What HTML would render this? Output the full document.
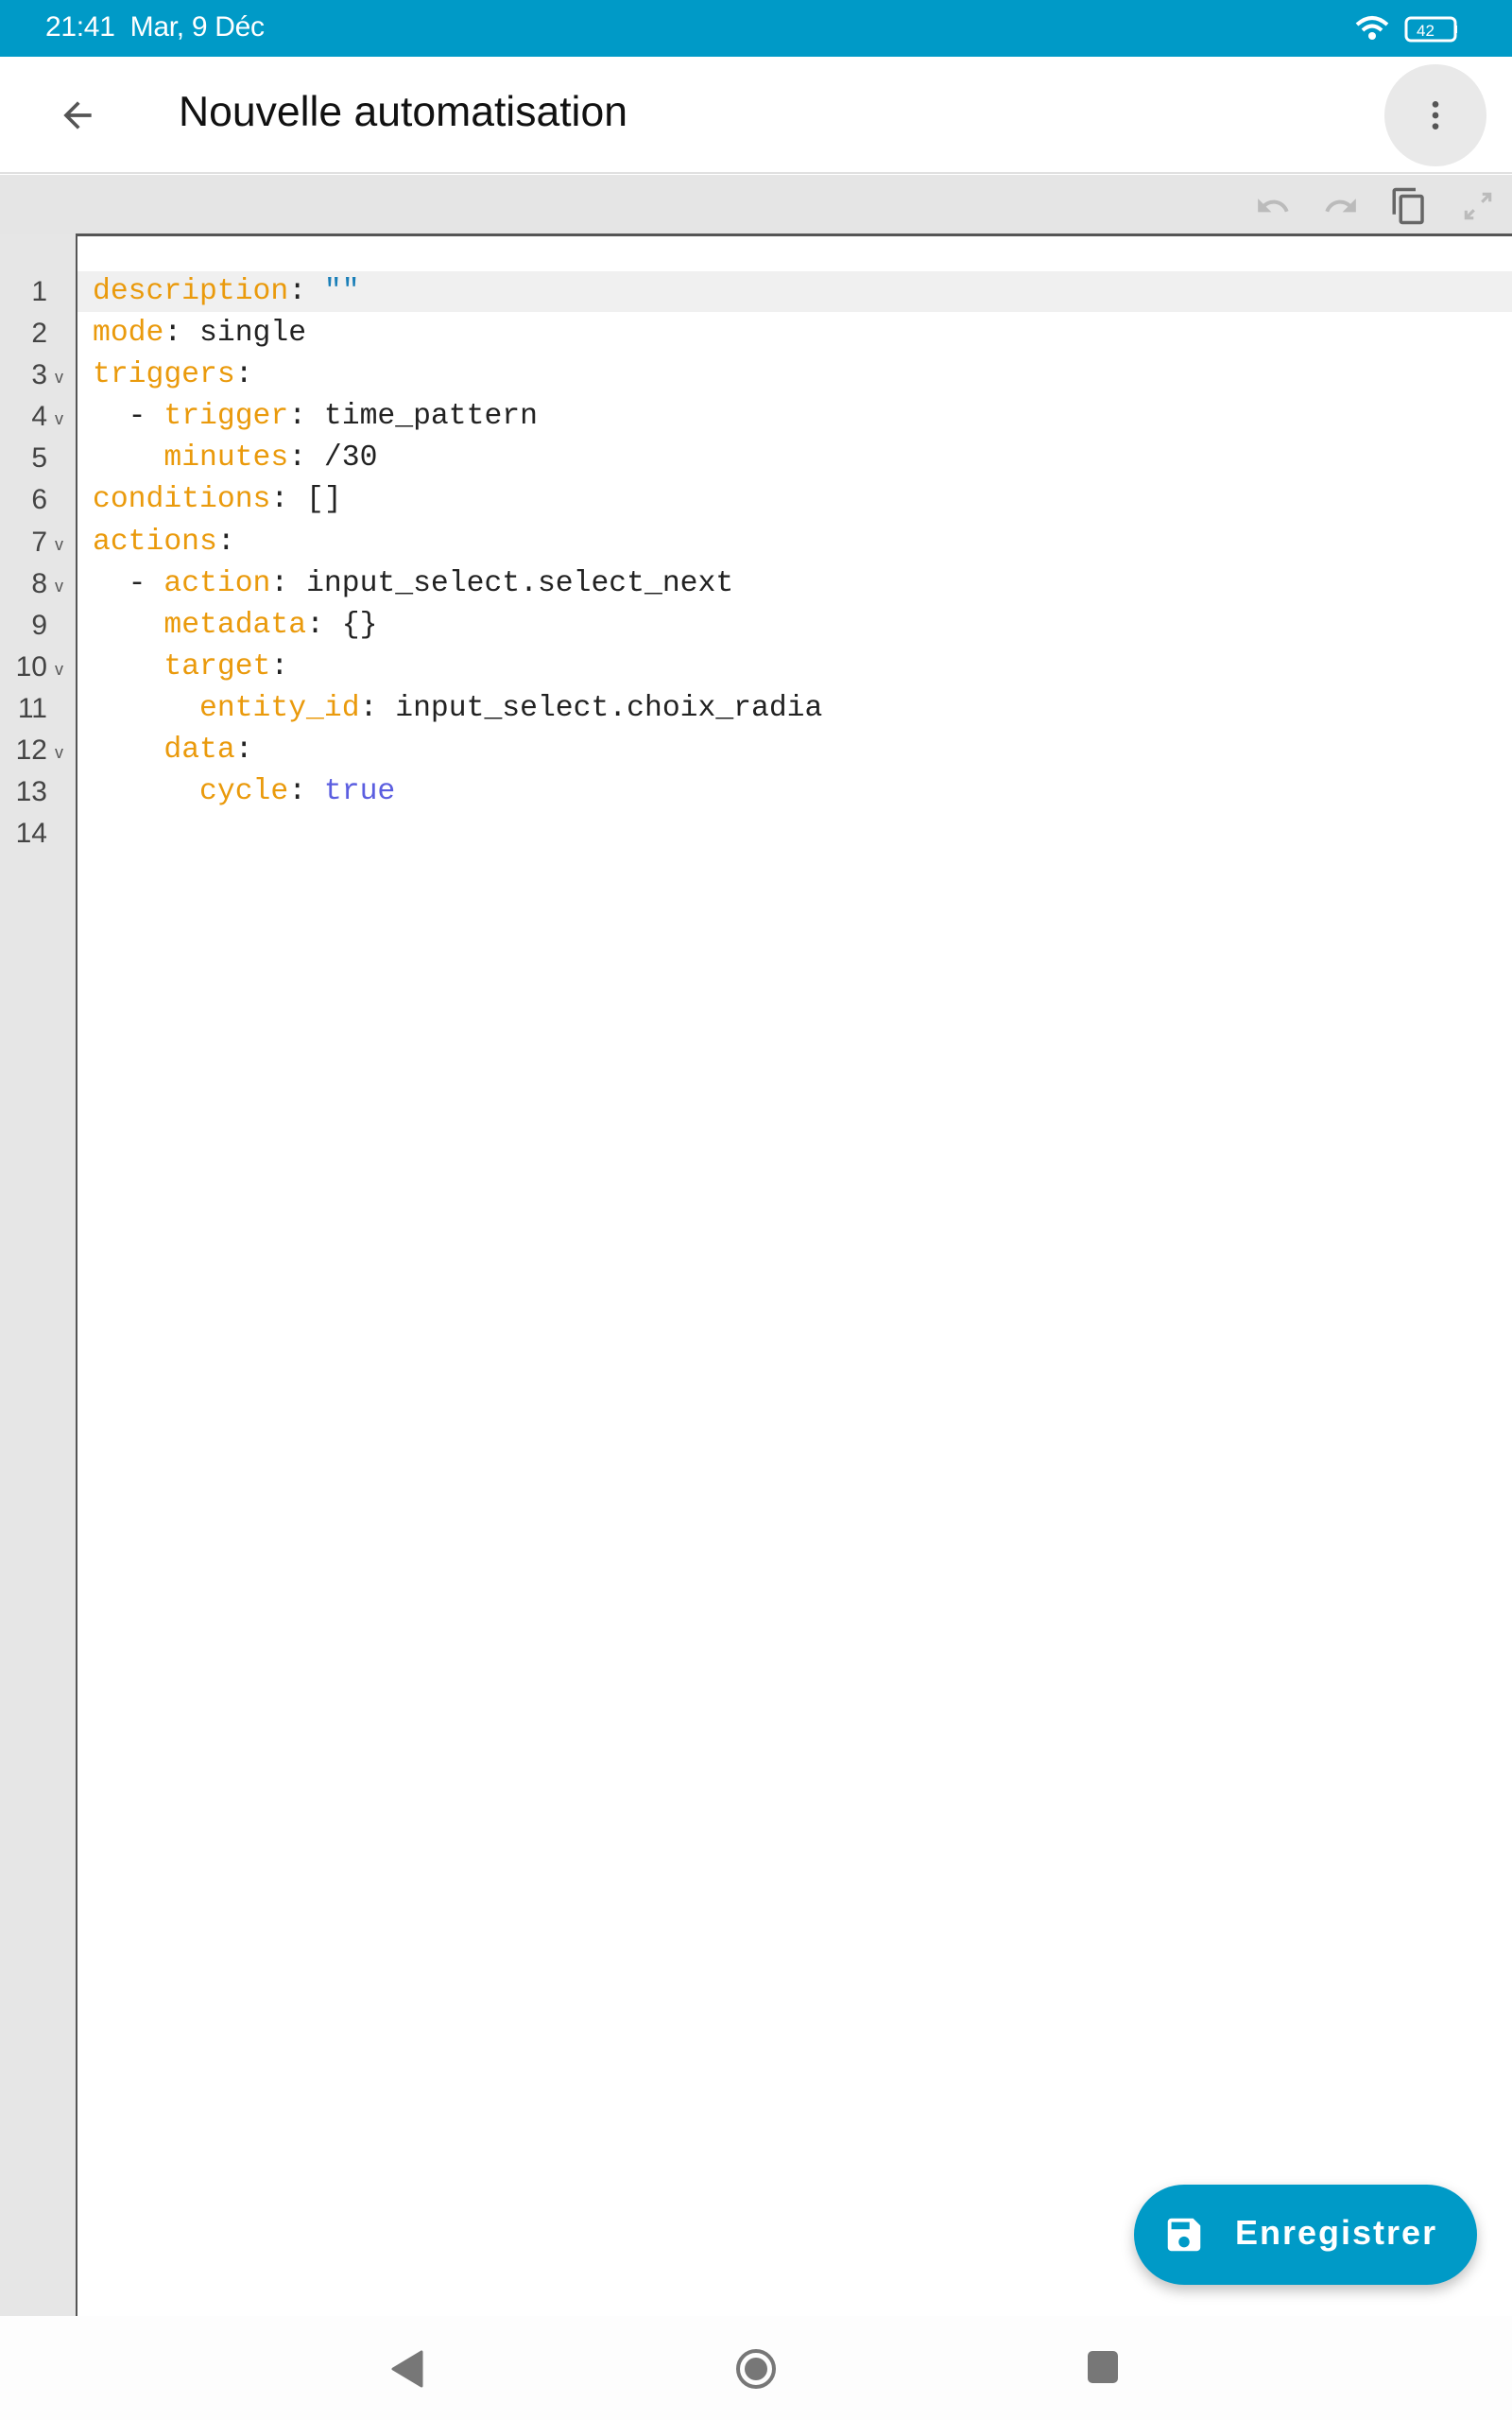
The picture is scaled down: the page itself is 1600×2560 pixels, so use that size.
<!DOCTYPE html>
<html><head><meta charset="utf-8"><style>
*{margin:0;padding:0;box-sizing:border-box}
body{width:1600px;height:2560px;position:relative;overflow:hidden;background:#fff;font-family:"Liberation Sans",sans-serif}
.status{position:absolute;left:0;top:0;width:1600px;height:60px;background:#009ac7;color:#fff}
.status .t{position:absolute;left:48px;top:12px;font-size:30px;letter-spacing:-0.3px}
.appbar{position:absolute;left:0;top:60px;width:1600px;height:124px;background:#fff;border-bottom:2px solid #e0e0e0}
.title{position:absolute;left:189px;top:34px;font-size:44.5px;color:#111}
.menu{position:absolute;left:1465px;top:8px;width:108px;height:108px;border-radius:50%;background:#e9e9e9}
.tool{position:absolute;left:0;top:185px;width:1600px;height:63px;background:#e5e5e5}
.gutter{position:absolute;left:0;top:248px;width:82px;height:2202px;background:#e6e6e6;border-right:2px solid #555}
.edtop{position:absolute;left:80px;top:247px;width:1520px;height:3px;background:#555}
.active{position:absolute;left:82px;top:287px;width:1518px;height:43px;background:#f0f0f0}
.code{position:absolute;left:98px;top:287px;font-family:"Liberation Mono",monospace;font-size:31.4px;line-height:44.1px;white-space:pre;color:#222}
.ln{position:absolute;left:0;top:287px;width:50px;text-align:right;font-family:"Liberation Sans",sans-serif;font-size:30px;line-height:44.1px;color:#444;white-space:pre}
.fold{position:absolute;left:58px;top:289px;font-size:18px;line-height:44.1px;color:#555;white-space:pre}
.k{color:#ea9a0c}.s{color:#1a7fb8}.b{color:#5b5ee0}
.fab{position:absolute;left:1200px;top:2311px;width:363px;height:106px;border-radius:53px;background:#009ac7;box-shadow:0 6px 14px rgba(0,0,0,.25);color:#fff}
.fab span{position:absolute;left:107px;top:30px;font-size:36px;font-weight:bold;letter-spacing:2px}
.nav{position:absolute;left:0;top:2450px;width:1600px;height:110px;background:#fdfdfd}
</style></head><body>
<div class="status"><div class="t">21:41&nbsp; Mar, 9 Déc</div>
<svg style="position:absolute;left:1432px;top:14px" width="110" height="34" viewBox="0 0 110 34">
<path d="M4 12 Q20 -2 36 12" stroke="#fff" stroke-width="4" fill="none"/>
<path d="M10 18 Q20 9 30 18" stroke="#fff" stroke-width="4" fill="none"/>
<circle cx="20" cy="24" r="4" fill="#fff"/>
<rect x="56" y="5" width="52" height="24" rx="5" stroke="#fff" stroke-width="3" fill="none"/>
<text x="67" y="24" font-size="17" fill="#fff" font-family="Liberation Sans">42</text>
<rect x="108" y="13" width="3" height="8" fill="#fff"/></svg></div>
<div class="appbar">
<svg style="position:absolute;left:60px;top:40px" width="44" height="44" viewBox="0 0 24 24"><path d="M20 11H7.8l5.6-5.6L12 4l-8 8 8 8 1.4-1.4L7.8 13H20z" fill="#555"/></svg>
<div class="title">Nouvelle automatisation</div>
<div class="menu"><svg style="position:absolute;left:34px;top:34px" width="40" height="40" viewBox="0 0 24 24"><circle cx="12" cy="5" r="2" fill="#555"/><circle cx="12" cy="12" r="2" fill="#555"/><circle cx="12" cy="19" r="2" fill="#555"/></svg></div>
</div>
<div class="tool">
<svg style="position:absolute;left:1328px;top:14px" width="38" height="38" viewBox="0 0 24 24"><path d="M12.5 8c-2.65 0-5.050 1-6.9 2.6L2 7v9h9l-3.62-3.62c1.39-1.16 3.16-1.88 5.12-1.88 3.54 0 6.55 2.31 7.6 5.5l2.37-.78C21.08 11.03 17.15 8 12.5 8z" fill="#bbb"/></svg>
<svg style="position:absolute;left:1400px;top:14px" width="38" height="38" viewBox="0 0 24 24"><path d="M18.4 10.6C16.55 9 14.15 8 11.5 8c-4.65 0-8.58 3.03-9.960 7.22L3.9 16c1.05-3.19 4.05-5.5 7.6-5.5 1.95 0 3.73.72 5.12 1.88L13 16h9V7z" fill="#bbb"/></svg>
<svg style="position:absolute;left:1470px;top:12px" width="42" height="42" viewBox="0 0 24 24"><path d="M16 1H4c-1.1 0-2 .9-2 2v14h2V3h12V1zm3 4H8c-1.1 0-2 .9-2 2v14c0 1.1.9 2 2 2h11c1.1 0 2-.9 2-2V7c0-1.1-.9-2-2-2zm0 16H8V7h11v14z" fill="#666"/></svg>
<svg style="position:absolute;left:1545px;top:14px" width="38" height="38" viewBox="0 0 24 24"><path d="M21 3v6h-2V6.4L15.4 10 14 8.6 17.6 5H15V3zM3 21v-6h2v2.6L8.6 14 10 15.4 6.4 19H9v2z" fill="#bbb"/></svg>
</div>
<div class="gutter"></div>
<div class="edtop"></div>
<div class="active"></div>
<div class="ln">1
2
3
4
5
6
7
8
9
10
11
12
13
14</div>
<div class="fold">

v
v


v
v

v

v</div>
<div class="code"><span class="k">description</span>: <span class="s">""</span>
<span class="k">mode</span>: single
<span class="k">triggers</span>:
  - <span class="k">trigger</span>: time_pattern
    <span class="k">minutes</span>: /30
<span class="k">conditions</span>: []
<span class="k">actions</span>:
  - <span class="k">action</span>: input_select.select_next
    <span class="k">metadata</span>: {}
    <span class="k">target</span>:
      <span class="k">entity_id</span>: input_select.choix_radia
    <span class="k">data</span>:
      <span class="k">cycle</span>: <span class="b">true</span>
</div>
<div class="fab"><svg style="position:absolute;left:30px;top:30px" width="46" height="46" viewBox="0 0 24 24"><path d="M17 3H5c-1.1 0-2 .9-2 2v14c0 1.1.9 2 2 2h14c1.1 0 2-.9 2-2V7l-4-4zm-5 16c-1.66 0-3-1.34-3-3s1.34-3 3-3 3 1.34 3 3-1.34 3-3 3zm3-10H5V5h10v4z" fill="#fff"/></svg><span>Enregistrer</span></div>
<div class="nav">
<svg style="position:absolute;left:410px;top:36px" width="40" height="40" viewBox="0 0 40 40"><path d="M36 2 L36 38 L6 20 Z" fill="#777" stroke="#777" stroke-width="3" stroke-linejoin="round"/></svg>
<svg style="position:absolute;left:778px;top:34px" width="44" height="44" viewBox="0 0 44 44"><circle cx="22" cy="22" r="19" stroke="#777" stroke-width="4" fill="none"/><circle cx="22" cy="22" r="12" fill="#777"/></svg>
<div style="position:absolute;left:1151px;top:37px;width:32px;height:34px;border-radius:5px;background:#777"></div>
</div>
</body></html>
